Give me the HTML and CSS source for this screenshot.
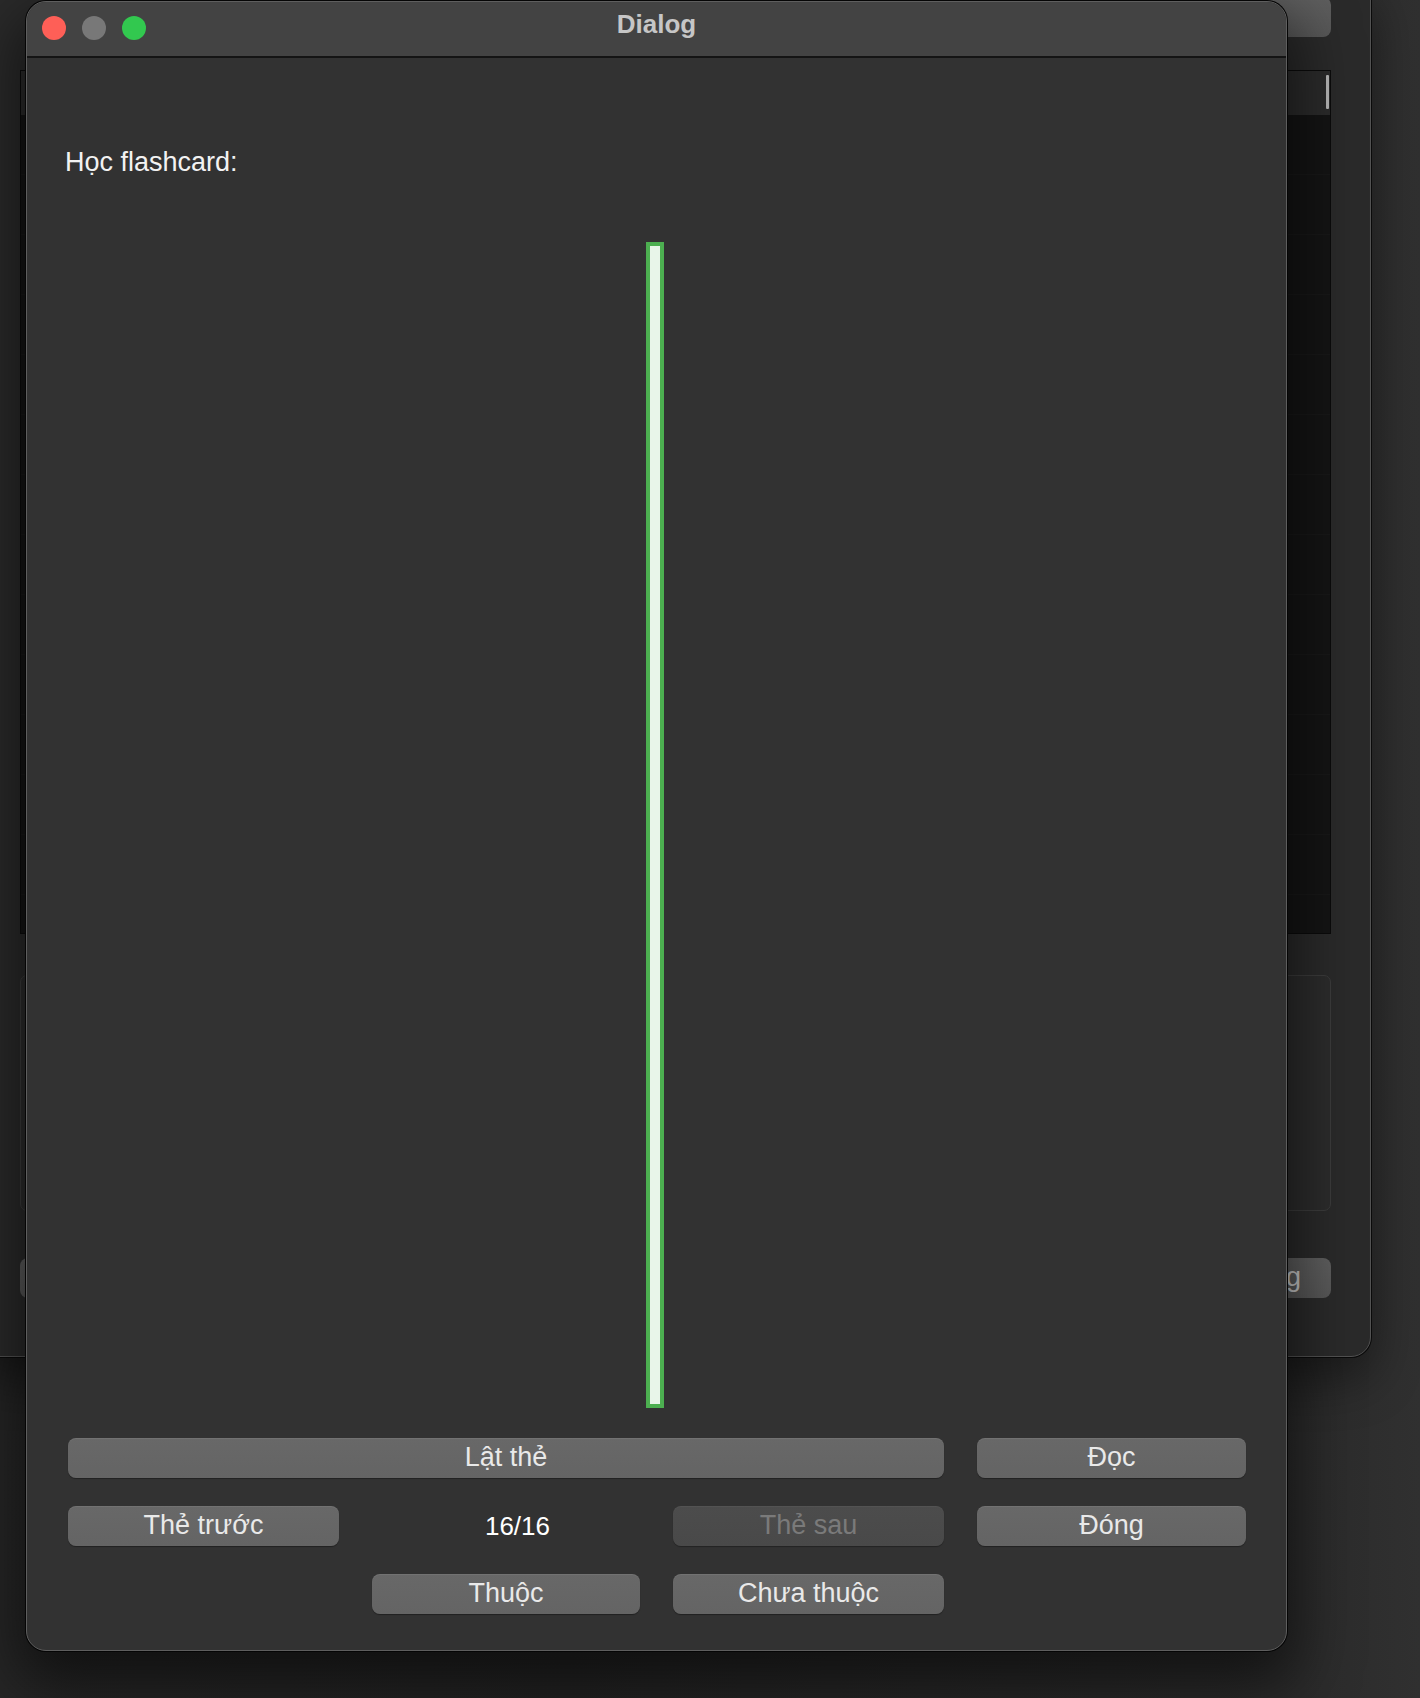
FILE: index.html
```html
<!DOCTYPE html>
<html lang="vi">
<head>
<meta charset="utf-8">
<title>Dialog</title>
<link rel="stylesheet" href="styles.css">
</head>
<body>
<div class="desktop">
  <div class="bgwin">
    <div class="bg-topbar">
      <div class="bg-btn bg-btn-top"></div>
    </div>
    <div class="bg-table">
      <div class="bg-thead"><span class="bg-scroll"></span></div>
      <div class="bg-row"></div><div class="bg-row"></div><div class="bg-row"></div>
      <div class="bg-row"></div><div class="bg-row"></div><div class="bg-row"></div>
      <div class="bg-row"></div><div class="bg-row"></div><div class="bg-row"></div>
      <div class="bg-row"></div><div class="bg-row"></div><div class="bg-row"></div>
      <div class="bg-row"></div>
    </div>
    <div class="bg-group"></div>
    <div class="bg-actions">
      <div class="bg-btn bg-btn-left">Thêm</div>
      <div class="bg-btn bg-btn-right">Đóng</div>
    </div>
  </div>

  <div class="dialog">
    <div class="titlebar">
      <div class="lights">
        <span class="light light-red"></span>
        <span class="light light-gray"></span>
        <span class="light light-green"></span>
      </div>
      <div class="title">Dialog</div>
    </div>
    <div class="content">
      <div class="label">Học flashcard:</div>
      <div class="card-bar"></div>
      <div class="controls">
        <button class="btn btn-flip">Lật thẻ</button>
        <button class="btn btn-read">Đọc</button>
        <button class="btn btn-prev">Thẻ trước</button>
        <div class="counter">16/16</div>
        <button class="btn btn-next" disabled>Thẻ sau</button>
        <button class="btn btn-close">Đóng</button>
        <button class="btn btn-known">Thuộc</button>
        <button class="btn btn-unknown">Chưa thuộc</button>
      </div>
    </div>
  </div>
</div>
</body>
</html>
```

FILE: styles.css
```css
* { box-sizing: border-box; }

html, body {
  margin: 0;
  padding: 0;
}

body {
  width: 1420px;
  height: 1698px;
  overflow: hidden;
  background: #2e2e2e;
  font-family: "Liberation Sans", Arial, sans-serif;
}

.desktop {
  position: relative;
  width: 1420px;
  height: 1698px;
  background: linear-gradient(90deg, #262626 0%, #222 40%, #2a2a2a 90%, #303030 100%);
}

/* ---------- background window ---------- */
.bgwin {
  position: absolute;
  left: -20px;
  top: -20px;
  width: 1391px;
  height: 1377px;
  background: #2a2a2a;
  border: 1px solid #525252;
  border-radius: 20px;
  box-shadow: 0 0 0 1px #0a0a0a, 0 20px 50px rgba(0, 0, 0, 0.45);
  padding: 0 39px;
  display: flex;
  flex-direction: column;
}

.bg-topbar {
  display: flex;
  justify-content: flex-end;
  margin-top: 16px;
}

.bg-btn {
  height: 40px;
  border-radius: 8px;
  background: linear-gradient(180deg, #5e5e5e, #575757);
  color: #c9c9c9;
  font-size: 27px;
  line-height: 38px;
}

.bg-btn-top {
  width: 270px;
}

.bg-table {
  margin-top: 33px;
  height: 864px;
  background: #141414;
  border: 1px solid #0b0b0b;
  display: flex;
  flex-direction: column;
  overflow: hidden;
}

.bg-thead {
  height: 44px;
  flex: none;
  background: #2b2b2b;
  display: flex;
  justify-content: flex-end;
  padding: 4px 1px 0 0;
}

.bg-scroll {
  width: 3px;
  height: 34px;
  background: #b5b5b5;
  border-radius: 1px;
}

.bg-row {
  height: 60px;
  flex: none;
  border-bottom: 1px solid #181818;
}

.bg-group {
  margin-top: 41px;
  height: 236px;
  border: 1px solid #3c3c3c;
  border-radius: 7px;
  background: #2c2c2c;
}

.bg-actions {
  margin-top: 47px;
  display: flex;
  justify-content: space-between;
}

.bg-btn-left {
  width: 300px;
  text-align: center;
}

.bg-btn-right {
  width: 300px;
  text-align: right;
  padding-right: 30px;
}

/* ---------- dialog ---------- */
.dialog {
  position: absolute;
  left: 26px;
  top: 1px;
  width: 1261px;
  height: 1650px;
  background: #323232;
  border: 1px solid #5e5e5e;
  border-radius: 20px;
  overflow: hidden;
  box-shadow: 0 0 0 1px #050505, 0 24px 60px 10px rgba(0, 0, 0, 0.55);
  display: flex;
  flex-direction: column;
}

.titlebar {
  height: 56px;
  flex: none;
  background: #434343;
  border-bottom: 2px solid #141414;
  display: grid;
  grid-template-areas: "stack";
}

.lights {
  grid-area: stack;
  display: flex;
  gap: 16px;
  padding: 14px 0 0 15px;
  align-items: flex-start;
}

.light {
  width: 24px;
  height: 24px;
  border-radius: 50%;
  display: block;
}

.light-red { background: #fe5f57; }
.light-gray { background: #787878; }
.light-green { background: #32c84f; }

.title {
  grid-area: stack;
  text-align: center;
  font-weight: 700;
  font-size: 26px;
  line-height: 30px;
  padding-top: 7px;
  color: #c6c6c6;
}

.content {
  flex: 1;
  display: flex;
  flex-direction: column;
  padding: 88px 40px 0 41px;
}

.label {
  font-size: 27px;
  line-height: 32px;
  height: 32px;
  color: #f2f2f2;
  margin-left: -3px;
}

.card-bar {
  align-self: center;
  margin-top: 64px;
  margin-right: 4px;
  width: 18px;
  height: 1166px;
  background: #e8f5e9;
  border: 4px solid #4caf50;
}

.controls {
  margin-top: 30px;
  display: grid;
  grid-template-columns: 271px 268px 271px 1fr;
  grid-auto-rows: 40px;
  column-gap: 33px;
  row-gap: 28px;
}

.btn {
  font-family: "Liberation Sans", Arial, sans-serif;
  font-size: 27px;
  line-height: 38px;
  height: 40px;
  padding: 0 0 2px;
  margin: 0;
  border: none;
  border-radius: 8px;
  background: linear-gradient(180deg, #686868 0%, #646464 100%);
  color: #e9e9e9;
  box-shadow: inset 0 1px 0 rgba(255, 255, 255, 0.07), 0 1px 1px rgba(0, 0, 0, 0.35);
  text-align: center;
}

.btn-flip { grid-column: 1 / 4; }
.btn-read { grid-column: 4; }
.btn-prev { grid-column: 1; }
.counter {
  grid-column: 2;
  text-align: center;
  padding-left: 23px;
  font-size: 26px;
  line-height: 40px;
  color: #ffffff;
}
.btn-next { grid-column: 3; }
.btn-close { grid-column: 4; }
.btn-known { grid-column: 2; }
.btn-unknown { grid-column: 3; }

.btn:disabled {
  background: linear-gradient(180deg, #4c4c4c 0%, #494949 100%);
  color: #7a7a7a;
  box-shadow: inset 0 1px 0 rgba(255, 255, 255, 0.04), 0 1px 1px rgba(0, 0, 0, 0.3);
}
```
